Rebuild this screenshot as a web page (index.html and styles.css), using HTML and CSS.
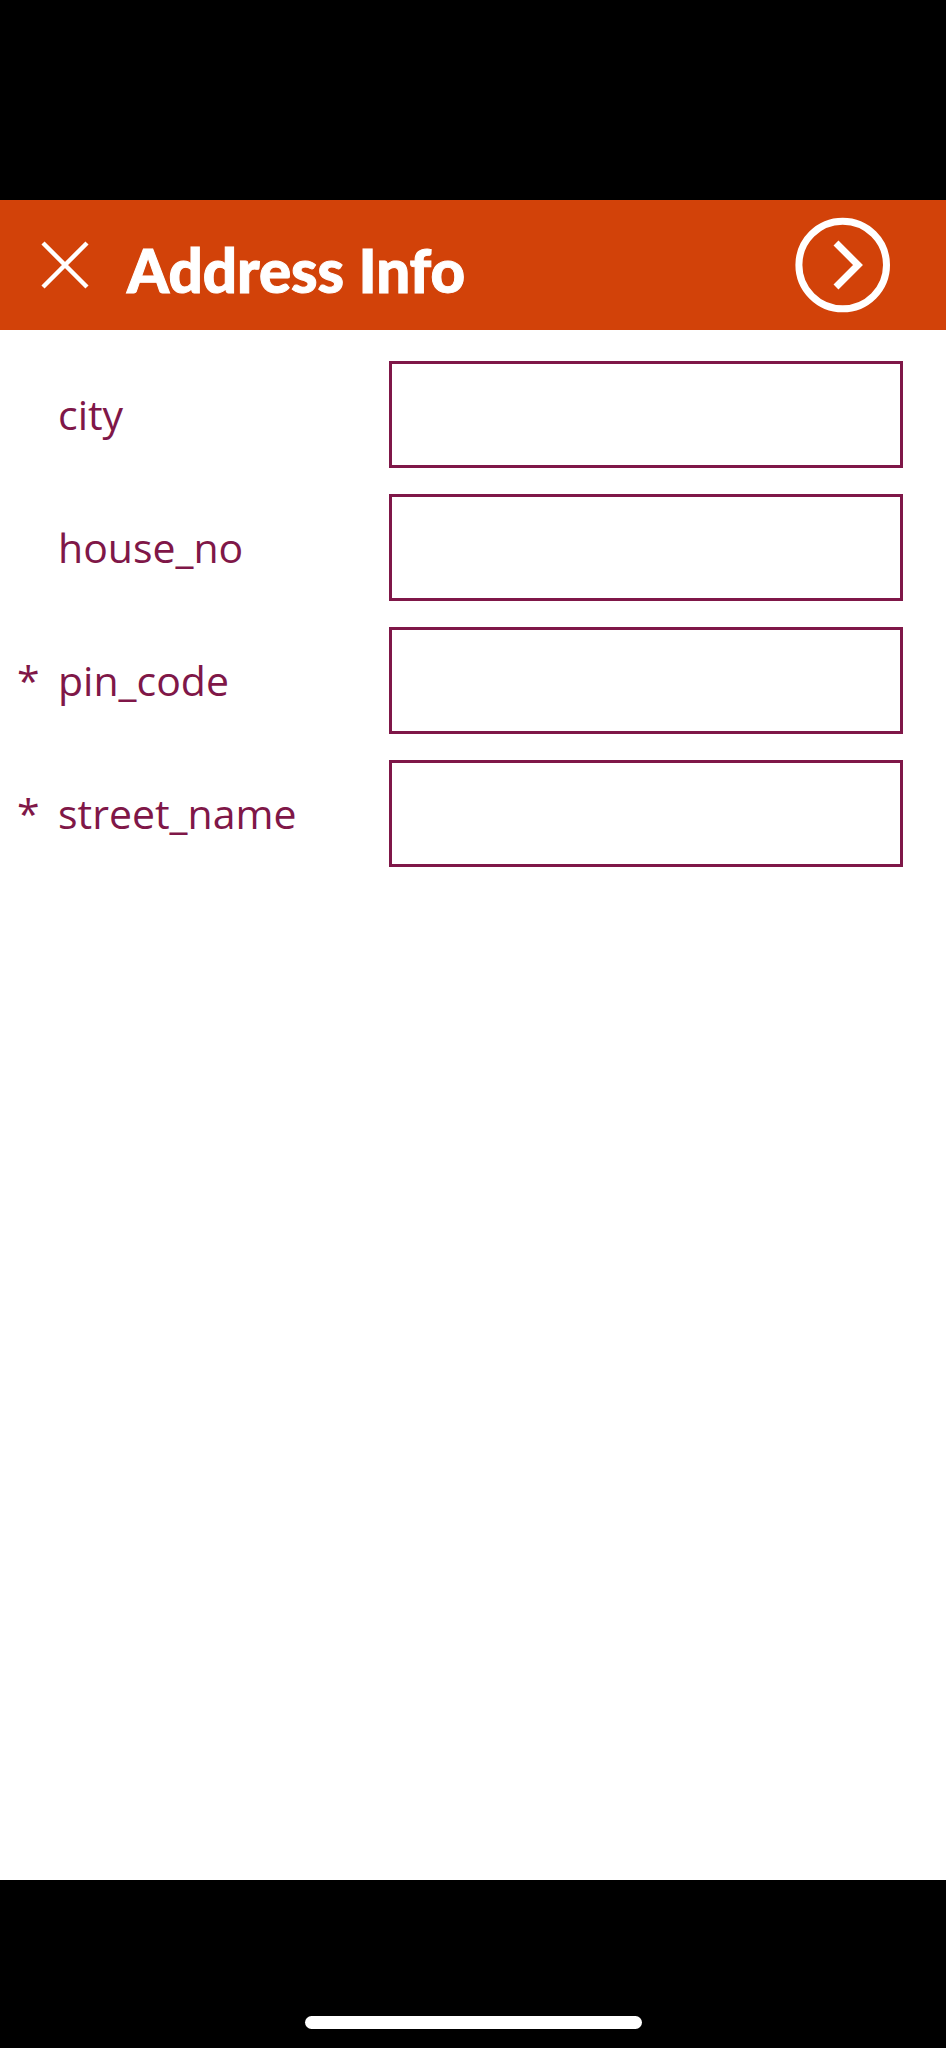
FILE: index.html
```html
<!DOCTYPE html>
<html lang="en">
<head>
<meta charset="utf-8">
<meta name="viewport" content="width=device-width, initial-scale=1">
<title>Address Info</title>
<link rel="stylesheet" href="styles.css">
</head>
<body>
<div class="screen">
  <header class="toolbar">
    <button class="icon-button" type="button" aria-label="Close">
      <svg class="close-icon" viewBox="0 0 48 48" fill="none" stroke="#fff" stroke-width="4.4" aria-hidden="true"><path d="M2 2l44 44M46 2L2 46"/></svg>
    </button>
    <h1 class="title">Address Info</h1>
    <button class="icon-button" type="submit" form="address" aria-label="Next">
      <svg class="next-icon" viewBox="0 0 96 96" fill="none" stroke="#fff" stroke-width="7" aria-hidden="true"><circle cx="47.7" cy="48" r="43.8"/><path d="M41 26l22 22-22 22"/></svg>
    </button>
  </header>
  <form class="fields" id="address">
    <div class="field"><span class="mark"></span><label class="label" for="city">city</label><input class="input" id="city" type="text"></div>
    <div class="field"><span class="mark"></span><label class="label" for="house_no">house_no</label><input class="input" id="house_no" type="text"></div>
    <div class="field"><span class="mark">*</span><label class="label" for="pin_code">pin_code</label><input class="input" id="pin_code" type="text" required></div>
    <div class="field"><span class="mark">*</span><label class="label" for="street_name">street_name</label><input class="input" id="street_name" type="text" required></div>
  </form>
  <footer class="home-area"><div class="home-indicator"></div></footer>
</div>
</body>
</html>
```
FILE: styles.css
```css
* {
  box-sizing: border-box;
}

body {
  margin: 0;
  background: #fff;
  color: #7f1748;
  font-family: "Open Sans", "Noto Sans", sans-serif;
}

.screen {
  display: flex;
  flex-direction: column;
  min-height: 100vh;
  border-top: 200px solid #000;
}

.toolbar {
  display: flex;
  align-items: center;
  padding: 0 55px 0 41px;
  min-height: 130px;
  background: #d24209;
  color: #fff;
}

.icon-button {
  padding: 0;
  border: 0;
  background: none;
  cursor: pointer;
}

.icon-button svg {
  display: block;
}

.close-icon {
  width: 48px;
}

.next-icon {
  width: 96px;
}

.title {
  flex: 1;
  margin: 0;
  padding: 10px 0 0 38px;
  font: 900 60px/72px Lato, sans-serif;
  -webkit-text-stroke: 1px #fff;
}

.fields {
  display: flex;
  flex: 1;
  flex-direction: column;
  gap: 26px;
  padding: 31px 43px 31px 17px;
}

.field {
  display: grid;
  grid-template-columns: 41px 331px 1fr;
  align-items: center;
  font-size: 41px;
  line-height: 58px;
}

.mark,
.label {
  padding-bottom: 2px;
}

.input {
  width: 100%;
  height: 107px;
  padding: 0 20px;
  border: 3px solid #7f1748;
  border-radius: 0;
  background: #fff;
  color: inherit;
  font: inherit;
}

.home-area {
  display: flex;
  align-items: flex-end;
  justify-content: center;
  height: 168px;
  padding-bottom: 19px;
  background: #000;
}

.home-indicator {
  width: 337px;
  height: 13px;
  border-radius: 7px;
  background: #fff;
}
```
